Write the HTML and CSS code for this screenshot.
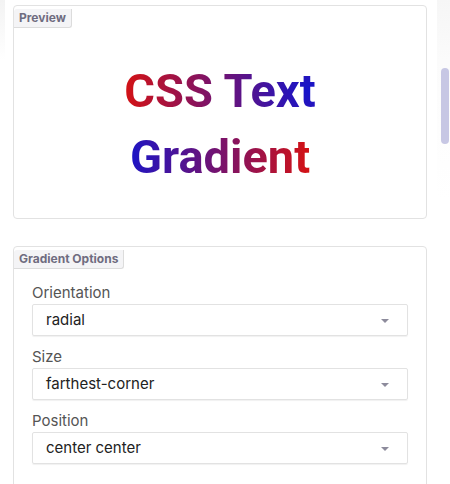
FILE: index.html
```html
<!DOCTYPE html>
<html lang="en">
<head>
  <meta charset="UTF-8" />
  <meta name="viewport" content="width=device-width, initial-scale=1.0" />
  <title>CSS Text Gradient</title>
  <link rel="stylesheet" href="styles.css">
</head>
<body>
  <div class="edge-left"></div>
  <div class="scroller"><div class="thumb"></div></div>

  <div class="page">
    <div class="panel preview">
      <div class="tab">Preview</div>
      <div class="preview-body">
        <h1 class="grad-text"><span>CSS Text Gradient</span></h1>
      </div>
    </div>

    <div class="panel options">
      <div class="tab">Gradient Options</div>
      <div class="options-body">
        <div class="field">
          <label>Orientation</label>
          <div class="select">radial<span class="caret"></span></div>
        </div>
        <div class="field">
          <label>Size</label>
          <div class="select">farthest-corner<span class="caret"></span></div>
        </div>
        <div class="field">
          <label>Position</label>
          <div class="select">center center<span class="caret"></span></div>
        </div>
      </div>
    </div>
  </div>
</body>
</html>
```

FILE: styles.css
```css
body {
  margin: 0;
  font-family: Inter, "Noto Sans", sans-serif;
  background: #fff;
  color: #222;
  overflow: hidden;
}
.page {
  width: 414px;
  padding: 5px 0 0 13px;
}
.edge-left {
  position: absolute;
  left: 0;
  top: 0;
  width: 5px;
  height: 60px;
  background: linear-gradient(to bottom, #f3f3f3, #fff);
}
.scroller {
  position: absolute;
  right: 0;
  top: 0;
  width: 13px;
  height: 484px;
  background: linear-gradient(to bottom, #f6f6f6 0, #fbfbfb 60px, #fff 200px);
}
.thumb {
  position: absolute;
  left: 4px;
  top: 68px;
  width: 8px;
  height: 76px;
  border-radius: 4px;
  background: #c7c7e4;
}
.panel {
  border: 1px solid #e2e2e2;
  border-radius: 4px;
  background: #fff;
}
.tab {
  display: inline-block;
  font-size: 12px;
  font-weight: 700;
  color: #6f6c80;
  background: #f4f4f6;
  border-right: 1px solid #dcdcdc;
  border-bottom: 1px solid #dcdcdc;
  border-radius: 3px 0 3px 0;
  padding: 2px 5px 2px 5px;
  line-height: 14px;
}
.preview {
  height: 212px;
}
.preview-body {
  text-align: center;
  padding-top: 30px;
}
.grad-text {
  margin: 0;
  font-family: Roboto, "Liberation Sans", sans-serif;
  font-size: 47px;
  font-weight: 700;
  line-height: 66px;
  padding: 0 90px;
}
.grad-text span {
  background: radial-gradient(circle farthest-corner at center center, #1414cc, #d61212);
  -webkit-background-clip: text;
  background-clip: text;
  color: transparent;
}
.options {
  margin-top: 27px;
  height: 260px;
}
.options-body {
  padding: 14px 18px 0 18px;
}
.field {
  margin-bottom: 11px;
}
.field label {
  display: block;
  font-size: 15px;
  color: #555;
  line-height: 20px;
  margin-bottom: 1px;
}
.select {
  position: relative;
  height: 30px;
  line-height: 30px;
  border: 1px solid #e2e2e2;
  border-radius: 2px;
  box-shadow: 0 1px 1px rgba(0,0,0,0.06);
  padding-left: 13px;
  font-size: 15px;
  color: #222;
}
.caret {
  position: absolute;
  right: 18px;
  top: 14px;
  width: 0;
  height: 0;
  border-left: 4px solid transparent;
  border-right: 4px solid transparent;
  border-top: 4px solid #8d8b9c;
}
```
